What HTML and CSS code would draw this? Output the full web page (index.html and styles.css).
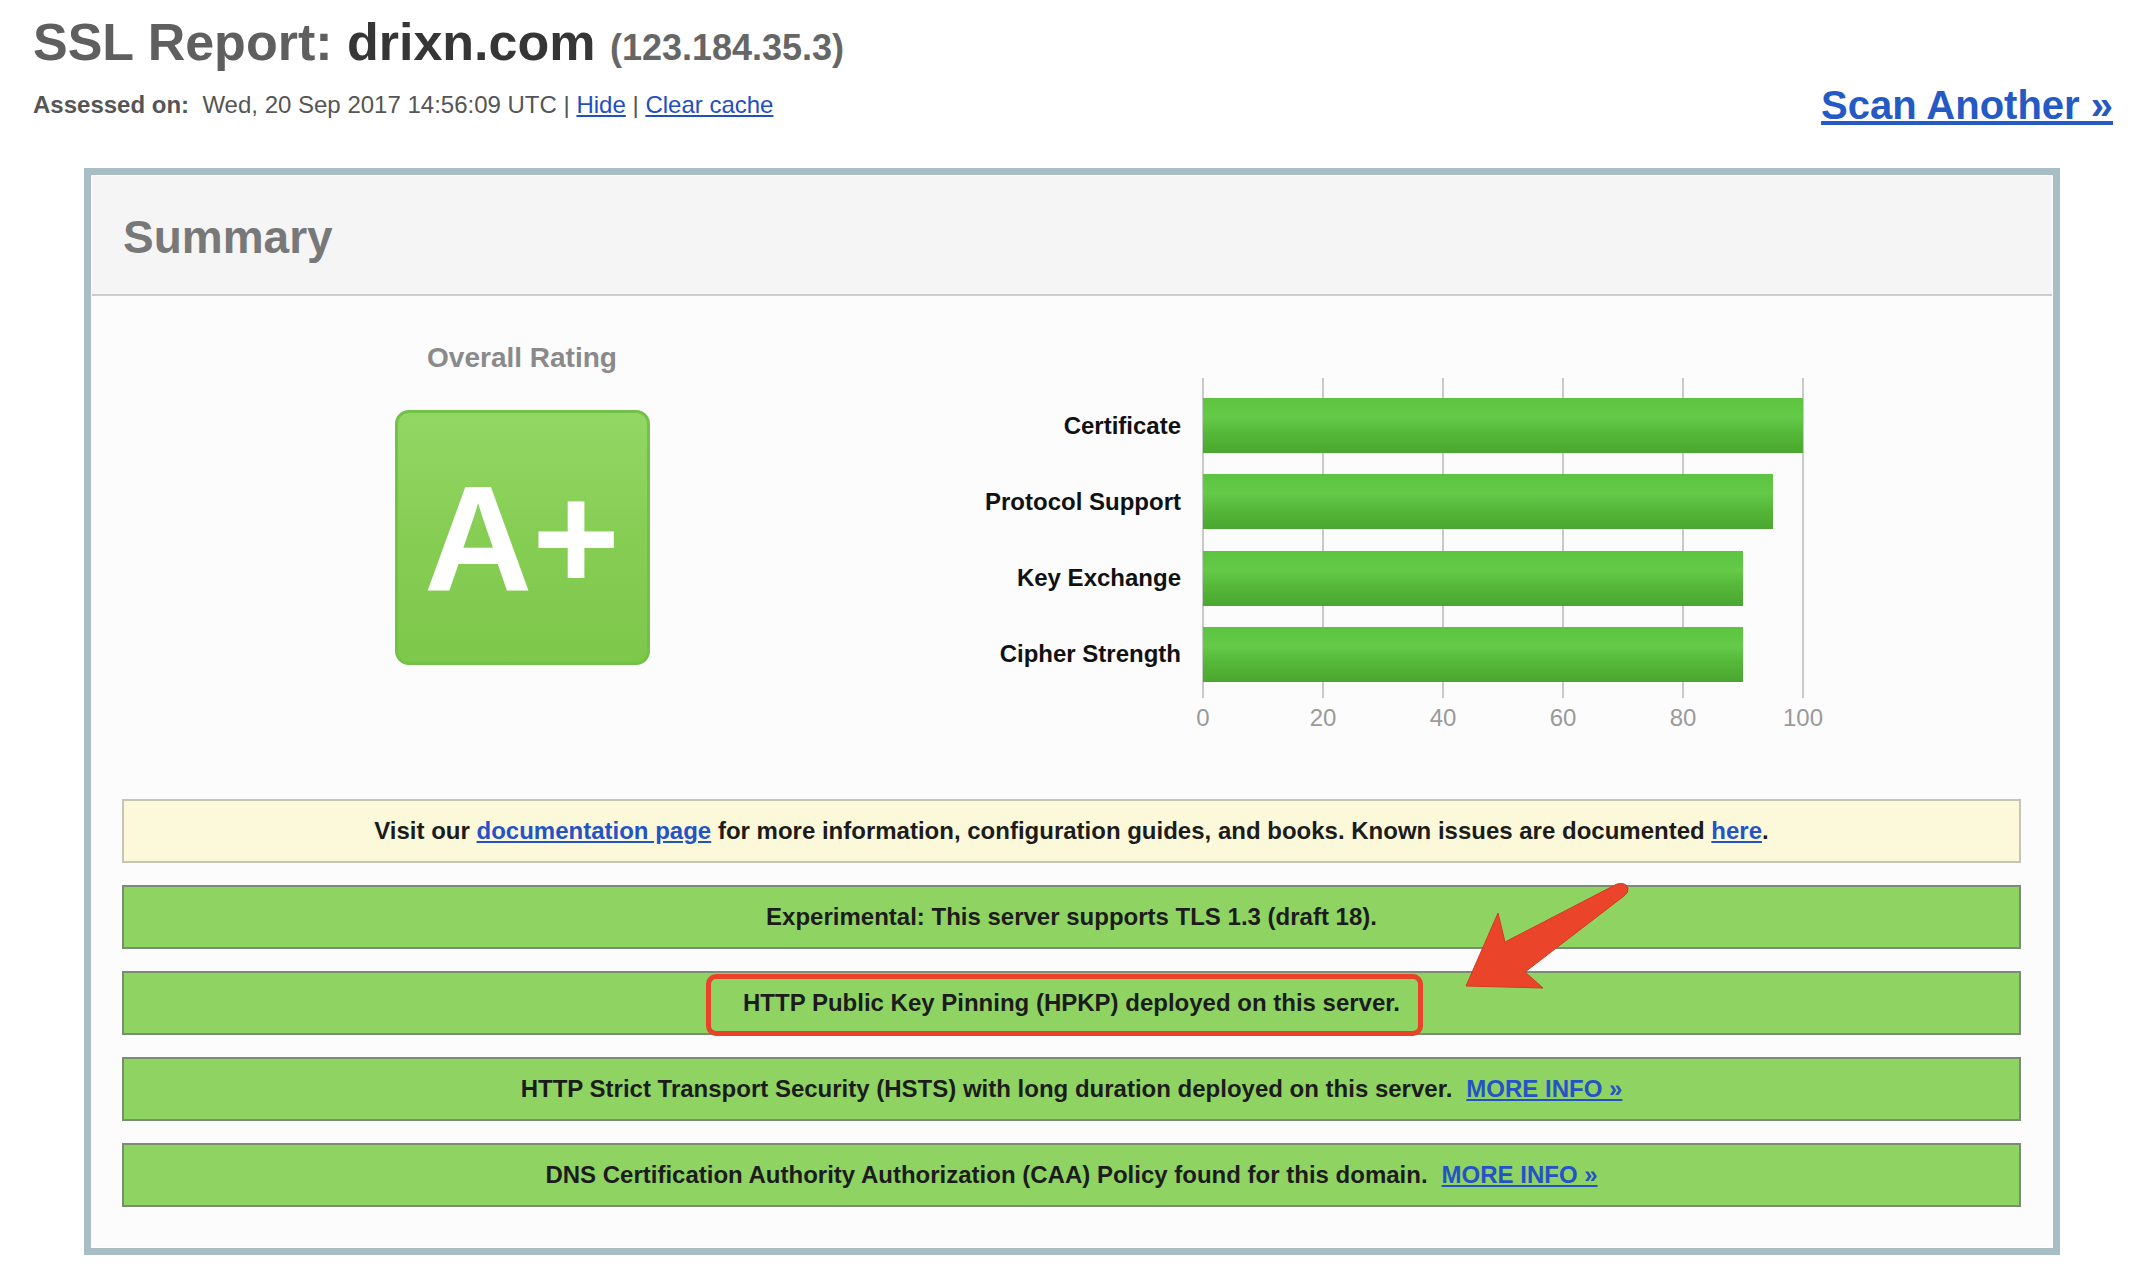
FILE: index.html
```html
<!DOCTYPE html>
<html lang="en">
<head>
<meta charset="utf-8">
<title>SSL Report: drixn.com</title>
<link rel="stylesheet" href="styles.css">
</head>
<body>
<div class="page">
  <h1 class="report-title"><span class="title-label">SSL Report:</span> <span class="title-host">drixn.com</span> <span class="title-ip">(123.184.35.3)</span></h1>
  <div class="meta-row">
    <div class="assessed"><b>Assessed on:</b>&nbsp; Wed, 20 Sep 2017 14:56:09 UTC | <a href="#">Hide</a> | <a href="#">Clear cache</a></div>
    <a class="scan-another" href="#">Scan Another »</a>
  </div>

  <div class="summary">
    <div class="summary-head">Summary</div>
    <div class="summary-body">
      <div class="rating-row">
        <div class="rating-col">
          <div class="rating-title">Overall Rating</div>
          <div class="grade">A+</div>
        </div>
        <div class="chart">
          <div class="chart-labels">
            <div class="chart-label">Certificate</div>
            <div class="chart-label">Protocol Support</div>
            <div class="chart-label">Key Exchange</div>
            <div class="chart-label">Cipher Strength</div>
          </div>
          <svg class="chart-plot" width="650" height="360" viewBox="0 0 650 360">
            <defs>
              <linearGradient id="barGrad" x1="0" y1="0" x2="0" y2="1">
                <stop offset="0" stop-color="#5cc441"/>
                <stop offset="0.35" stop-color="#64ca48"/>
                <stop offset="0.6" stop-color="#57ba3b"/>
                <stop offset="1" stop-color="#4aa62f"/>
              </linearGradient>
            </defs>
            <g stroke="#c9c9c9" stroke-width="2">
              <line x1="10" y1="0" x2="10" y2="320"/>
              <line x1="130" y1="0" x2="130" y2="320"/>
              <line x1="250" y1="0" x2="250" y2="320"/>
              <line x1="370" y1="0" x2="370" y2="320"/>
              <line x1="490" y1="0" x2="490" y2="320"/>
              <line x1="610" y1="0" x2="610" y2="320"/>
            </g>
            <g fill="url(#barGrad)">
              <rect x="10" y="20" width="600" height="55"/>
              <rect x="10" y="96" width="570" height="55"/>
              <rect x="10" y="173" width="540" height="55"/>
              <rect x="10" y="249" width="540" height="55"/>
            </g>
            <g class="axis-text" text-anchor="middle">
              <text x="10" y="348">0</text>
              <text x="130" y="348">20</text>
              <text x="250" y="348">40</text>
              <text x="370" y="348">60</text>
              <text x="490" y="348">80</text>
              <text x="610" y="348">100</text>
            </g>
          </svg>
        </div>
      </div>

      <div class="notices">
        <div class="notice notice-info">Visit our&nbsp;<a href="#">documentation page</a>&nbsp;for more information, configuration guides, and books. Known issues are documented&nbsp;<a href="#">here</a>.</div>
        <div class="notice notice-good">Experimental: This server supports TLS 1.3 (draft 18).</div>
        <div class="notice notice-good notice-marked">HTTP Public Key Pinning (HPKP) deployed on this server.<span class="mark-box"></span></div>
        <div class="notice notice-good">HTTP Strict Transport Security (HSTS) with long duration deployed on this server.<a class="more" href="#">MORE INFO »</a></div>
        <div class="notice notice-good">DNS Certification Authority Authorization (CAA) Policy found for this domain.<a class="more" href="#">MORE INFO »</a></div>
        <svg class="mark-arrow" width="175" height="115" viewBox="0 0 175 115">
          <path d="M157 4 Q166 2 168 8 Q169 13 164 16 L65 92 L83 108 L6 106 L38 33 L45 62 Z" fill="#ea452b" stroke="#d23a22" stroke-width="1" stroke-linejoin="round"/>
        </svg>
      </div>
    </div>
  </div>
</div>
</body>
</html>
```

FILE: styles.css
```css
html, body {
  margin: 0;
  padding: 0;
  background: #ffffff;
}

body {
  font-family: "Liberation Sans", Arial, Helvetica, sans-serif;
  color: #222;
}

.page {
  padding: 0 33px;
}

.report-title {
  margin: 12px 0 0 0;
  font-size: 52px;
  font-weight: bold;
  line-height: normal;
  color: #5f5f5f;
}

.title-host {
  color: #363636;
}

.title-ip {
  font-size: 36px;
  color: #666;
}

.meta-row {
  display: flex;
  justify-content: space-between;
  align-items: flex-start;
  margin-top: 19px;
}

.assessed {
  font-size: 24px;
  color: #555;
  line-height: normal;
}

.assessed b {
  color: #555;
}

.assessed a {
  color: #1f4fc2;
  text-decoration: underline;
}

.scan-another {
  margin-top: -8px;
  font-size: 40px;
  font-weight: bold;
  color: #2559c4;
  text-decoration: underline;
  line-height: normal;
}

.summary {
  margin: 40px 0 0 51px;
  width: 1976px;
  box-sizing: border-box;
  border: 7px solid #a9bdc5;
  padding: 1px;
  background: #ffffff;
}

.summary-head {
  height: 120px;
  box-sizing: border-box;
  padding: 34px 31px 0 31px;
  background: #f5f5f5;
  border-bottom: 2px solid #cccccc;
  font-size: 46px;
  font-weight: bold;
  color: #787878;
  line-height: normal;
}

.summary-body {
  background: #fcfcfc;
  padding: 0 31px 40px 30px;
}

.rating-row {
  display: flex;
  align-items: flex-start;
}

.rating-col {
  width: 800px;
  display: flex;
  flex-direction: column;
  align-items: center;
  padding-top: 46px;
}

.rating-title {
  font-size: 28px;
  font-weight: bold;
  color: #8a8a8a;
  line-height: normal;
}

.grade {
  margin-top: 36px;
  width: 255px;
  height: 255px;
  box-sizing: border-box;
  border: 3px solid #72c247;
  border-radius: 14px;
  background: linear-gradient(to bottom, #92d764 0%, #86cd54 50%, #7dc84b 100%);
  display: flex;
  align-items: center;
  justify-content: center;
  color: #ffffff;
  font-size: 150px;
  font-weight: bold;
  line-height: 1;
}

.chart {
  display: flex;
  align-items: flex-start;
  padding-top: 82px;
}

.chart-labels {
  width: 259px;
  padding-top: 20px;
  display: grid;
  grid-auto-rows: 55px;
  row-gap: 21.33px;
  margin-right: 12px;
}

.chart-label {
  display: flex;
  align-items: center;
  justify-content: flex-end;
  font-size: 24px;
  font-weight: bold;
  color: #111;
}

.chart-plot {
  display: block;
  overflow: visible;
}

.axis-text {
  font-family: "Liberation Sans", Arial, sans-serif;
  font-size: 24px;
  fill: #9a9a9a;
}

.notices {
  position: relative;
  margin-top: 61px;
  display: flex;
  flex-direction: column;
  gap: 22px;
}

.notice {
  height: 64px;
  box-sizing: border-box;
  display: flex;
  align-items: center;
  justify-content: center;
  font-size: 24px;
  font-weight: bold;
  color: #1c1c1c;
  white-space: pre;
}

.notice a {
  color: #2553c6;
  text-decoration: underline;
}

.notice-info {
  background: #fcf9da;
  border: 2px solid #c4c4b8;
}

.notice-good {
  background: #8fd462;
  border: 2px solid #7a8d74;
}

.notice .more {
  margin-left: 14px;
}

.notice-marked {
  position: relative;
}

.mark-box {
  position: absolute;
  left: 582px;
  top: 1px;
  width: 717px;
  height: 62px;
  box-sizing: border-box;
  border: 5px solid #e8432a;
  border-radius: 10px;
}

.mark-arrow {
  position: absolute;
  left: 1338px;
  top: 81px;
}
```
